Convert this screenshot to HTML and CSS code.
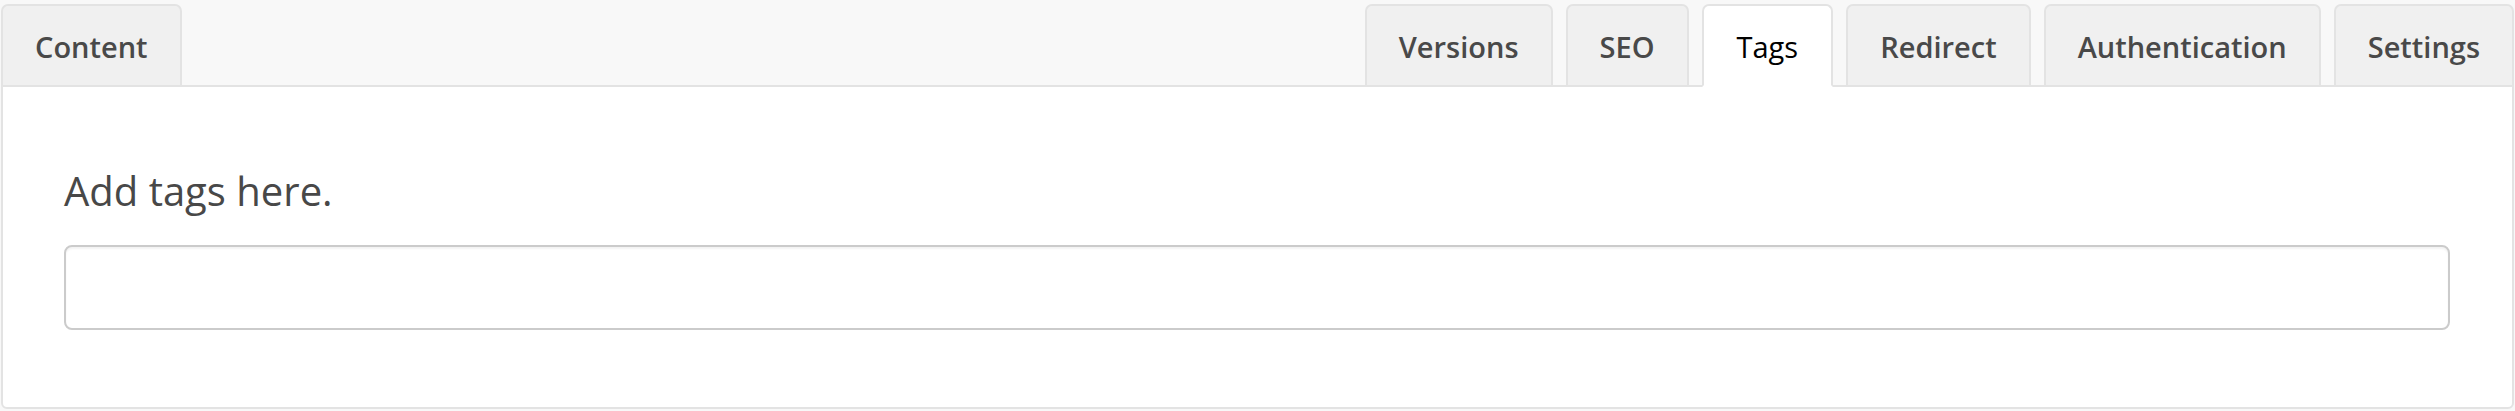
FILE: index.html
```html
<!DOCTYPE html>
<html lang="en">
<head>
<meta charset="utf-8">
<title>Tags</title>
<link rel="stylesheet" href="styles.css">
</head>
<body>
<div class="wrap">
  <div class="tabs">
    <div class="tab">Content</div>
    <div class="spacer"></div>
    <div class="tab">Versions</div>
    <div class="tab">SEO</div>
    <div class="tab active">Tags</div>
    <div class="tab">Redirect</div>
    <div class="tab">Authentication</div>
    <div class="tab">Settings</div>
  </div>
  <div class="panel">
    <label class="label" for="tags">Add tags here.</label>
    <input class="input" id="tags" type="text">
  </div>
</div>
</body>
</html>
```
FILE: styles.css
```css
html, body {
  margin: 0;
  padding: 0;
  background: #f8f8f8;
}
.wrap {
  padding: 4px 1px 0 1px;
  font-family: "Open Sans", "DejaVu Sans", sans-serif;
}
.tabs {
  display: flex;
  gap: 13px;
  position: relative;
  z-index: 1;
}
.spacer {
  flex: 1;
}
.tab {
  box-sizing: border-box;
  height: 83px;
  padding: 2px 32px 0 32px;
  display: flex;
  align-items: center;
  background: #f0f0f0;
  border: 2px solid #e3e3e3;
  border-radius: 7px 7px 0 0;
  font-size: 29px;
  font-weight: 600;
  color: #494949;
  margin-bottom: -2px;
}
.tab.active {
  background: #fff;
  border-bottom-color: #fff;
  color: #000;
  font-weight: 400;
  padding-left: 33px;
  padding-right: 33px;
}
.panel {
  background: #fff;
  border: 2px solid #e3e3e3;
  border-radius: 0 0 6px 6px;
  padding: 76px 62px 77px 61px;
  display: flex;
  flex-direction: column;
  gap: 26px;
}
.label {
  font-size: 40px;
  line-height: 56px;
  color: #484848;
}
.input {
  box-sizing: border-box;
  height: 85px;
  width: 100%;
  border: 2px solid #cbcbcb;
  border-radius: 8px;
  box-shadow: inset 0 2px 2px rgba(0,0,0,0.05);
  background: #fff;
  font: inherit;
  margin: 0;
}
```
